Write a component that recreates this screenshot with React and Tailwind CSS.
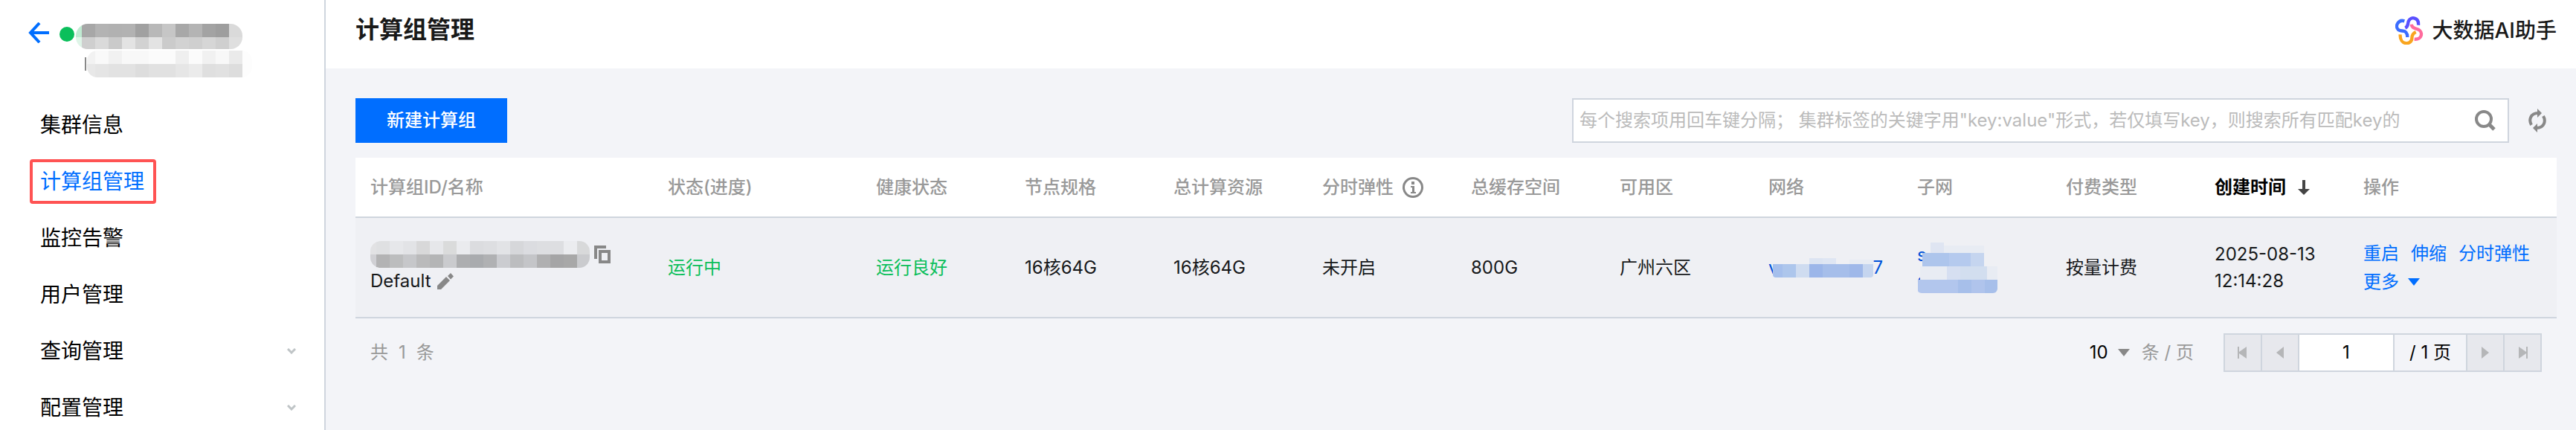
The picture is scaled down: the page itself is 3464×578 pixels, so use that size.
import { useId, useState } from "react";

const NAV = [
  { label: "集群信息" },
  { label: "计算组管理", active: true },
  { label: "监控告警" },
  { label: "用户管理" },
  { label: "查询管理", expandable: true },
  { label: "配置管理", expandable: true },
];

const CLUSTER_NAME = [
  { x: -10, y: 0, h: 18, colors: ["#bfebd2", "#a7a7a7", "#b3b3b3", "#b1b1b1", "#b2b2b2", "#a1a1a1", "#b8b8b8", "#c6c6c6", "#a8a8a8", "#b4b4b4", "#a3a3a3", "#9e9e9e", "#dadada"] },
  { x: -10, y: 18, h: 16, colors: ["#dff5e8", "#cfcfcf", "#dadada", "#cacaca", "#e3e3e3", "#d2d2d2", "#e3e3e3", "#cbcbcb", "#d2d2d2", "#cfcfcf", "#d6d6d6", "#cfcfcf", "#dfdfdf"] },
];

const CLUSTER_ID = [
  { x: -7, y: 0, h: 18, colors: ["#f2f2f2", "#f9f9f9", "#f1f1f1", "#f8f8f8", "#f8f8f8", "#fbfbfb", "#fbfbfb", "#efefef", "#fbfbfb", "#f1f1f1", "#f8f8f8", "#eaeaea", "#fdfdfd"] },
  { x: -7, y: 18, h: 18, colors: ["#e8e8e8", "#e5e5e5", "#e2e2e2", "#e2e2e2", "#dddddd", "#e1e1e1", "#e1e1e1", "#e6e6e6", "#ebebeb", "#dfdfdf", "#e1e1e1", "#dddddd", "#fdfdfd"] },
];

const GROUP_ID = [
  { x: -10, y: 0, h: 18, colors: ["#e2e2e4", "#dfe0e2", "#e6e7ea", "#e2e3e6", "#d8d8d9", "#e6e7ea", "#dadbdb", "#eaebee", "#dbdcdf", "#dddee1", "#e2e3e6", "#d6d7da", "#dbdce0", "#dddee1", "#dddee1", "#ebecef", "#d8d9da"] },
  { x: -10, y: 18, h: 18, colors: ["#d0d0d4", "#b3b3b4", "#bcbdbe", "#c6c7ca", "#bababb", "#b4b5b6", "#cacbce", "#adaeb0", "#a9abae", "#b0b1b3", "#cbccd0", "#bcbdbf", "#c4c5c8", "#b0b0b1", "#a5a5a6", "#a8a8a8", "#cacbce"] },
];

const NETWORK_ID = [
  { x: 49, y: 0, h: 8, colors: ["#dce4f2", "#dfe6f3"] },
  { x: 103, y: 2, h: 6, colors: ["#e8ecf3", "#e8ecf3"] },
  { x: -5, y: 8, h: 18, colors: ["#a5bfec", "#adc6ec", "#cfdcf0", "#9cb6e9", "#a6beea", "#a6beea", "#9fb8e9", "#c5d5ef"] },
];

const SUBNET_ID = [
  { x: 18, y: 0, h: 14, colors: ["#dfe5f2"] },
  { x: 36, y: 4, h: 10, colors: ["#e8ecf3", "#e8ecf3", "#e8ecf3"] },
  { x: 7, y: 14, h: 18, colors: ["#adc5ec", "#adc5ec", "#b5caee", "#b5caee"] },
  { x: 72, y: 14, h: 18, colors: ["#c5d5ef"] },
  { x: 4, y: 32, h: 18, colors: ["#e8ecf3", "#e8ecf3", "#d6dff1", "#d2deef", "#d2deef", "#e8ecf3"] },
  { x: 1, y: 50, h: 18, colors: ["#b2c6ed", "#b2c6ed", "#b2c6ed", "#a7bfea", "#b0c4ec", "#a7bfea"] },
];

function Mosaic({ width, height, radius, rows, className = "" }) {
  const id = useId();
  return (
    <svg width={width} height={height} className={`shrink-0 ${className}`} shapeRendering="crispEdges" aria-hidden="true">
      <clipPath id={id}>
        <rect width={width} height={height} rx={radius} />
      </clipPath>
      <g clipPath={`url(#${id})`}>
        {rows.map((row, r) =>
          row.colors.map((color, i) => (
            <rect key={`${r}-${i}`} x={row.x + i * 18} y={row.y} width="18" height={row.h} fill={color} />
          ))
        )}
      </g>
    </svg>
  );
}

function AssistantLogo() {
  return (
    <svg width="38" height="38" viewBox="0 0 114 114" fill="none" strokeWidth="13" aria-hidden="true">
      <path d="M37 19C12 11-3 40 12 54C22 62 35 55 43 64C48 70 49 78 49 84" stroke="#3b6dff" />
      <path d="M40 47C54 40 49 28 54 18C63-1 96 4 93 35" stroke="#5a50ff" />
      <path d="M65 32C67 47 78 47 90 52C114 61 109 95 77 92" stroke="#ff6b9d" />
      <path d="M20 73C17 118 66 117 67 88C67 74 74 67 83 63" stroke="#f9a51f" />
    </svg>
  );
}

function Caret({ className = "" }) {
  return (
    <svg width="16" height="10" viewBox="0 0 16 10" className={className} aria-hidden="true">
      <path d="M0 0h16L8 10z" fill="currentColor" />
    </svg>
  );
}

function Sidebar() {
  return (
    <aside className="w-[438px] shrink-0 border-r-2 border-[#cfd5de] bg-white">
      <div className="flex h-[138px] items-start pl-[38px] pt-[30px]">
        <a href="#back" aria-label="返回" className="shrink-0">
          <svg width="28" height="28" viewBox="0 0 28 28" fill="none" stroke="#006eff" strokeWidth="4" aria-hidden="true">
            <path d="M15 1L3 14l12 13M3 14h25" />
          </svg>
        </a>
        <span className="ml-3.5 mt-1.5 size-5 shrink-0 rounded-full bg-[#0abf5b]" />
        <div className="ml-0.5 mt-0.5">
          <Mosaic width={224} height={34} radius={16} rows={CLUSTER_NAME} />
          <div className="mt-0.5 flex items-center pl-3">
            <span className="mr-px h-[18px] w-0.5 bg-[#888]" />
            <Mosaic width={222} height={36} radius={14} rows={CLUSTER_ID} />
          </div>
        </div>
      </div>

      <nav className="flex flex-col gap-4 pl-10 pr-[38px]">
        {NAV.map((item) => (
          <a
            key={item.label}
            href={`#${item.label}`}
            className={`flex h-[60px] items-center border-4 pl-2.5 text-[28px] ${
              item.active
                ? "w-fit rounded-sm border-[#ff5353] pr-3 text-[#006eff]"
                : "justify-between border-transparent pr-0 text-black"
            }`}
          >
            {item.label}
            {item.expandable && (
              <svg width="12" height="8" viewBox="0 0 12 8" fill="none" stroke="#bfc4c6" strokeWidth="3" className="-mr-1" aria-hidden="true">
                <path d="M1 1l5 5 5-5" />
              </svg>
            )}
          </a>
        ))}
      </nav>
    </aside>
  );
}

function Toolbar() {
  const [query, setQuery] = useState("");
  return (
    <div className="flex items-center justify-between">
      <button className="h-[60px] bg-[#006eff] px-[42px] text-2xl font-medium text-white">新建计算组</button>

      <div className="flex items-center pr-3.5">
        <div className="flex h-[60px] w-[1260px] items-center border-2 border-[#cfd5de] bg-white pl-2 pr-4">
          <input
            type="text"
            aria-label="搜索计算组"
            value={query}
            onChange={(e) => setQuery(e.target.value)}
            placeholder={'每个搜索项用回车键分隔； 集群标签的关键字用"key:value"形式，若仅填写key，则搜索所有匹配key的'}
            className="min-w-0 flex-1 text-2xl text-black outline-none placeholder:text-[#bbb]"
          />
          <button aria-label="搜索">
            <svg width="28" height="28" viewBox="0 0 28 28" fill="none" stroke="#888" aria-hidden="true">
              <circle cx="12" cy="12" r="10" strokeWidth="4" />
              <path d="M19 19l7 7" strokeWidth="5" />
            </svg>
          </button>
        </div>
        <button aria-label="刷新" className="ml-[26px]">
          <svg width="24" height="32" viewBox="0 0 24 32" aria-hidden="true">
            <g fill="none" stroke="#888" strokeWidth="4">
              <path d="M4 22C0 15 3 6 13 6" />
              <path d="M20 10C24 17 21 26 11 26" />
            </g>
            <path d="M12 0l6 6-6 6zM12 20l-6 6 6 6z" fill="#888" />
          </svg>
        </button>
      </div>
    </div>
  );
}

function GroupTable() {
  return (
    <table className="mt-5 w-full table-fixed border-collapse text-left text-2xl text-[#16181a]">
      <colgroup>
        <col className="w-[400px]" />
        <col className="w-[280px]" />
        <col className="w-[200px]" span={10} />
        <col className="w-[280px]" />
      </colgroup>
      <thead>
        <tr className="h-[80px] border-b-2 border-[#cfd5de] bg-white text-[#999] [&>th]:px-5 [&>th]:font-medium">
          <th>计算组ID/名称</th>
          <th>状态(进度)</th>
          <th>健康状态</th>
          <th>节点规格</th>
          <th>总计算资源</th>
          <th>
            <span className="flex items-center gap-3 whitespace-nowrap">
              分时弹性
              <svg width="28" height="28" viewBox="0 0 28 28" className="shrink-0" aria-hidden="true">
                <circle cx="14" cy="14" r="12.5" fill="none" stroke="#888" strokeWidth="3" />
                <path d="M12 6h4v4h-4zM11 12h5v8h2v2h-7v-2h2v-6h-2z" fill="#888" />
              </svg>
            </span>
          </th>
          <th>总缓存空间</th>
          <th>可用区</th>
          <th>网络</th>
          <th>子网</th>
          <th>付费类型</th>
          <th aria-sort="descending">
            <button className="flex items-center gap-4 whitespace-nowrap font-semibold text-black">
              创建时间
              <svg width="16" height="20" viewBox="0 0 16 20" fill="#444" aria-hidden="true">
                <path d="M6 0h4v12h6l-8 8-8-8h6z" />
              </svg>
            </button>
          </th>
          <th>操作</th>
        </tr>
      </thead>
      <tbody>
        <tr className="h-[135px] border-b-2 border-[#cfd5de] bg-[#eff0f4] [&>td]:px-5">
          <td>
            <div className="flex items-center gap-1.5">
              <Mosaic width={295} height={36} radius={14} rows={GROUP_ID} />
              <button aria-label="复制">
                <svg width="22" height="24" viewBox="0 0 22 24" fill="none" stroke="#888" strokeWidth="4" aria-hidden="true">
                  <path d="M16 2H2v16" />
                  <path d="M8 8h12v14H8z" />
                </svg>
              </button>
            </div>
            <div className="flex h-9 items-center gap-2">
              Default
              <button aria-label="编辑名称">
                <svg width="22" height="22" viewBox="0 0 22 22" fill="#888" aria-hidden="true">
                  <path d="M0 17L12 5l5 5L5 22H0zM14 4l4-4 4 4.500-4 4z" />
                </svg>
              </button>
            </div>
          </td>
          <td className="text-[#0abf5b]">运行中</td>
          <td className="text-[#0abf5b]">运行良好</td>
          <td>16核64G</td>
          <td>16核64G</td>
          <td>未开启</td>
          <td>800G</td>
          <td>广州六区</td>
          <td>
            <a href="#network" className="flex items-center text-[#0052d9]">
              v
              <Mosaic width={135} height={26} radius={4} rows={NETWORK_ID} className="relative -ml-2" />
              7
            </a>
          </td>
          <td>
            <a href="#subnet" className="relative block text-[#0052d9]">
              <span className="block h-[34px] leading-[34px]">s</span>
              <span className="block h-[34px] leading-[34px]">o</span>
              <Mosaic width={108} height={68} radius={6} rows={SUBNET_ID} className="absolute left-0 top-0" />
            </a>
          </td>
          <td>按量计费</td>
          <td className="leading-9">2025-08-13 12:14:28</td>
          <td className="text-[#006eff]">
            <div className="flex h-[38px] items-center gap-4 whitespace-nowrap">
              <a href="#restart">重启</a>
              <a href="#scale">伸缩</a>
              <a href="#elastic">分时弹性</a>
            </div>
            <button className="flex h-[38px] items-center gap-3">
              更多
              <Caret />
            </button>
          </td>
        </tr>
      </tbody>
    </table>
  );
}

function PageButton({ label, d }) {
  return (
    <button aria-label={label} className="flex w-[48px] items-center justify-center bg-[#e7e8ed]">
      <svg width="14" height="16" viewBox="0 0 14 16" fill="#b5b6b8" aria-hidden="true">
        <path d={d} />
      </svg>
    </button>
  );
}

function Pagination() {
  const [size, setSize] = useState("10");
  const [page, setPage] = useState("1");
  return (
    <div className="mt-5 flex items-center justify-between pl-5 pr-5 text-2xl text-[#999]">
      <p className="flex gap-3.5">
        <span>共</span>
        <span>1</span>
        <span>条</span>
      </p>

      <div className="flex items-center">
        <div className="relative mr-4 flex items-center">
          <select
            id="page-size"
            value={size}
            onChange={(e) => setSize(e.target.value)}
            className="w-[54px] appearance-none text-black outline-none"
          >
            <option>10</option>
            <option>20</option>
            <option>50</option>
          </select>
          <Caret className="pointer-events-none absolute right-0 text-[#888]" />
        </div>
        <label htmlFor="page-size">条 / 页</label>

        <div className="ml-10 flex h-[52px] gap-0.5 border-2 border-[#cfd5de] bg-[#cfd5de]">
          <PageButton label="第一页" d="M0 0h2v7l10-7v16L2 9v7H0z" />
          <PageButton label="上一页" d="M12 0v16L2 8z" />
          <input
            type="text"
            aria-label="页码"
            value={page}
            onChange={(e) => setPage(e.target.value)}
            className="w-[126px] bg-white text-center text-black outline-none"
          />
          <span className="flex w-[96px] items-center justify-center bg-[#f3f4f8] text-black">/ 1 页</span>
          <PageButton label="下一页" d="M2 0v16l10-8z" />
          <PageButton label="最后一页" d="M14 0h-2v7L2 0v16l10-7v7h2z" />
        </div>
      </div>
    </div>
  );
}

export default function App() {
  return (
    <div className="flex min-h-screen bg-[#f3f4f8] font-['Inter','Noto_Sans_CJK_SC',sans-serif]">
      <Sidebar />
      <main className="min-w-0 flex-1">
        <header className="flex h-[92px] items-start justify-between bg-white pl-10 pr-[26px] pt-4">
          <h1 className="text-[32px] leading-[48px] font-semibold text-[#191919]">计算组管理</h1>
          <button className="flex h-[50px] items-center gap-3 text-[28px] font-medium text-[#191919]">
            <AssistantLogo />
            大数据AI助手
          </button>
        </header>
        <div className="pl-10 pr-[26px] pt-10">
          <Toolbar />
          <GroupTable />
          <Pagination />
        </div>
      </main>
    </div>
  );
}
